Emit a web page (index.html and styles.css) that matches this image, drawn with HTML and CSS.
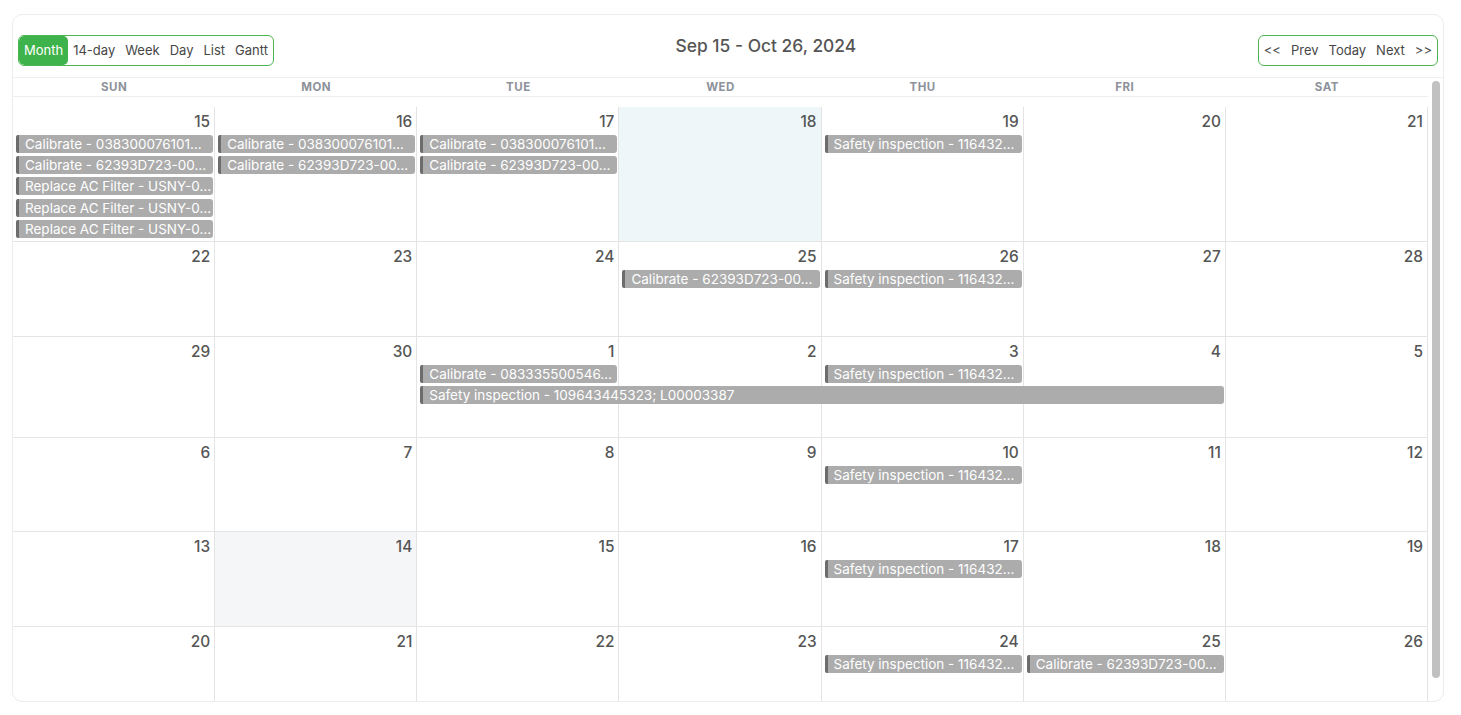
FILE: index.html
```html
<!DOCTYPE html>
<html lang="en">
<head>
<meta charset="utf-8">
<title>Calendar</title>
<link rel="stylesheet" href="styles.css">
</head>
<body>
<div class="card">
  <div class="toolbar">
    <div class="btn-group">
      <span class="btn active">Month</span>
      <span class="btn">14-day</span>
      <span class="btn">Week</span>
      <span class="btn">Day</span>
      <span class="btn">List</span>
      <span class="btn">Gantt</span>
    </div>
    <div class="title">Sep 15 - Oct 26, 2024</div>
    <div class="btn-group">
      <span class="btn">&lt;&lt;</span>
      <span class="btn">Prev</span>
      <span class="btn">Today</span>
      <span class="btn">Next</span>
      <span class="btn">&gt;&gt;</span>
    </div>
  </div>
  <div class="body">
    <div class="scroller">
      <div class="dow">
        <div>Sun</div><div>Mon</div><div>Tue</div><div>Wed</div><div>Thu</div><div>Fri</div><div>Sat</div>
      </div>

      <div class="week first tall">
        <div class="day c1"><span class="num">15</span></div>
        <div class="day c2"><span class="num">16</span></div>
        <div class="day c3"><span class="num">17</span></div>
        <div class="day c4 today"><span class="num">18</span></div>
        <div class="day c5"><span class="num">19</span></div>
        <div class="day c6"><span class="num">20</span></div>
        <div class="day c7"><span class="num">21</span></div>
        <div class="ev c1 r1">Calibrate - 038300076101…</div>
        <div class="ev c1 r2">Calibrate - 62393D723-00…</div>
        <div class="ev c1 r3">Replace AC Filter - USNY-0…</div>
        <div class="ev c1 r4">Replace AC Filter - USNY-0…</div>
        <div class="ev c1 r5">Replace AC Filter - USNY-0…</div>
        <div class="ev c2 r1">Calibrate - 038300076101…</div>
        <div class="ev c2 r2">Calibrate - 62393D723-00…</div>
        <div class="ev c3 r1">Calibrate - 038300076101…</div>
        <div class="ev c3 r2">Calibrate - 62393D723-00…</div>
        <div class="ev c5 r1">Safety inspection - 116432…</div>
      </div>

      <div class="week">
        <div class="day c1"><span class="num">22</span></div>
        <div class="day c2"><span class="num">23</span></div>
        <div class="day c3"><span class="num">24</span></div>
        <div class="day c4"><span class="num">25</span></div>
        <div class="day c5"><span class="num">26</span></div>
        <div class="day c6"><span class="num">27</span></div>
        <div class="day c7"><span class="num">28</span></div>
        <div class="ev c4 r1">Calibrate - 62393D723-00…</div>
        <div class="ev c5 r1">Safety inspection - 116432…</div>
      </div>

      <div class="week mid">
        <div class="day c1"><span class="num">29</span></div>
        <div class="day c2"><span class="num">30</span></div>
        <div class="day c3"><span class="num">1</span></div>
        <div class="day c4"><span class="num">2</span></div>
        <div class="day c5"><span class="num">3</span></div>
        <div class="day c6"><span class="num">4</span></div>
        <div class="day c7"><span class="num">5</span></div>
        <div class="ev c3 r1">Calibrate - 083335500546…</div>
        <div class="ev c5 r1">Safety inspection - 116432…</div>
        <div class="ev c3 span4 r2">Safety inspection - 109643445323; L00003387</div>
      </div>

      <div class="week short">
        <div class="day c1"><span class="num">6</span></div>
        <div class="day c2"><span class="num">7</span></div>
        <div class="day c3"><span class="num">8</span></div>
        <div class="day c4"><span class="num">9</span></div>
        <div class="day c5"><span class="num">10</span></div>
        <div class="day c6"><span class="num">11</span></div>
        <div class="day c7"><span class="num">12</span></div>
        <div class="ev c5 r1">Safety inspection - 116432…</div>
      </div>

      <div class="week">
        <div class="day c1"><span class="num">13</span></div>
        <div class="day c2 shade"><span class="num">14</span></div>
        <div class="day c3"><span class="num">15</span></div>
        <div class="day c4"><span class="num">16</span></div>
        <div class="day c5"><span class="num">17</span></div>
        <div class="day c6"><span class="num">18</span></div>
        <div class="day c7"><span class="num">19</span></div>
        <div class="ev c5 r1">Safety inspection - 116432…</div>
      </div>

      <div class="week">
        <div class="day c1"><span class="num">20</span></div>
        <div class="day c2"><span class="num">21</span></div>
        <div class="day c3"><span class="num">22</span></div>
        <div class="day c4"><span class="num">23</span></div>
        <div class="day c5"><span class="num">24</span></div>
        <div class="day c6"><span class="num">25</span></div>
        <div class="day c7"><span class="num">26</span></div>
        <div class="ev c5 r1">Safety inspection - 116432…</div>
        <div class="ev c6 r1">Calibrate - 62393D723-00…</div>
      </div>
    </div>
    <div class="rail"><div class="thumb"></div></div>
  </div>
</div>
</body>
</html>
```

FILE: styles.css
```css
* { box-sizing: border-box; }

html, body {
  margin: 0;
  padding: 0;
  background: #fff;
  font-family: Inter, "Liberation Sans", "Noto Sans", sans-serif;
  color: #555;
}

.card {
  margin: 14px 0 0 12px;
  width: 1432px;
  height: 688px;
  border: 1px solid #ececec;
  border-radius: 10px;
  overflow: hidden;
  background: #fff;
  display: flex;
  flex-direction: column;
}

.toolbar {
  height: 62px;
  flex: none;
  display: flex;
  justify-content: space-between;
  align-items: flex-start;
  padding: 20px 5px 0 5px;
}

.btn-group {
  display: flex;
  border: 1px solid #4cb54f;
  border-radius: 6px;
  height: 31px;
  overflow: hidden;
}

.btn {
  display: block;
  padding: 0 5px;
  line-height: 29px;
  font-size: 13px;
  color: #474747;
}

.btn.active {
  background: #3fb34b;
  color: #fff;
  border-radius: 5px;
}

.title {
  font-size: 17.4px;
  font-weight: 500;
  line-height: 20px;
  margin-top: 1px;
  color: #555;
}

.body {
  flex: 1 1 0;
  min-height: 0;
  display: flex;
}

.scroller {
  flex: 1 1 0;
  min-width: 0;
  overflow: hidden;
}

.rail {
  flex: none;
  width: 15px;
  padding: 3px 3px 0 4px;
  border-top: 1px solid #eeeeee;
}

.thumb {
  width: 8px;
  height: 597px;
  background: #c1c1c1;
  border-radius: 4px;
}

.dow {
  display: grid;
  grid-template-columns: repeat(7, minmax(0, 1fr));
  height: 20px;
  border-top: 1px solid #eeeeee;
  border-bottom: 1px solid #eeeeee;
  margin-bottom: 10px;
}

.dow div {
  text-align: center;
  font-size: 11.5px;
  font-weight: 700;
  letter-spacing: 0.5px;
  line-height: 18px;
  color: #8d929a;
  text-transform: uppercase;
}

.week {
  display: grid;
  grid-template-columns: repeat(7, minmax(0, 1fr));
  grid-template-rows: 28px 21.3px 1fr;
  height: 95px;
  border-top: 1px solid #e4e4e4;
}

.week.first { border-top: none; }
.week.tall {
  height: 134px;
  grid-template-rows: 28px repeat(5, 21.2px) 0;
}
.week.mid {
  height: 101px;
  grid-template-rows: 28px 21.3px 21.3px 1fr;
}
.week.short { height: 94px; }

.day {
  grid-row: 1 / -1;
  border-right: 1px solid #e4e4e4;
  text-align: right;
  padding: 4px 4px 0 0;
  min-width: 0;
}

.day.today { background: #eef6f9; }
.day.shade { background: #f5f6f8; }

.num {
  font-size: 15.4px;
  font-weight: 500;
  line-height: 20px;
  color: #555;
}

.ev {
  align-self: start;
  height: 18px;
  margin: 0 2px 0 3px;
  background: #acacac;
  border-left: 3px solid #6c6c6c;
  border-radius: 2px 3px 3px 2px;
  color: #fff;
  font-size: 13.5px;
  line-height: 18px;
  padding-left: 6px;
  white-space: nowrap;
  overflow: hidden;
  text-overflow: ellipsis;
  min-width: 0;
}

.c1 { grid-column: 1 / span 1; }
.c2 { grid-column: 2 / span 1; }
.c3 { grid-column: 3 / span 1; }
.c4 { grid-column: 4 / span 1; }
.c5 { grid-column: 5 / span 1; }
.c6 { grid-column: 6 / span 1; }
.c7 { grid-column: 7 / span 1; }
.c3.span4 { grid-column: 3 / span 4; }

.r1 { grid-row: 2; }
.r2 { grid-row: 3; }
.r3 { grid-row: 4; }
.r4 { grid-row: 5; }
.r5 { grid-row: 6; }
```
